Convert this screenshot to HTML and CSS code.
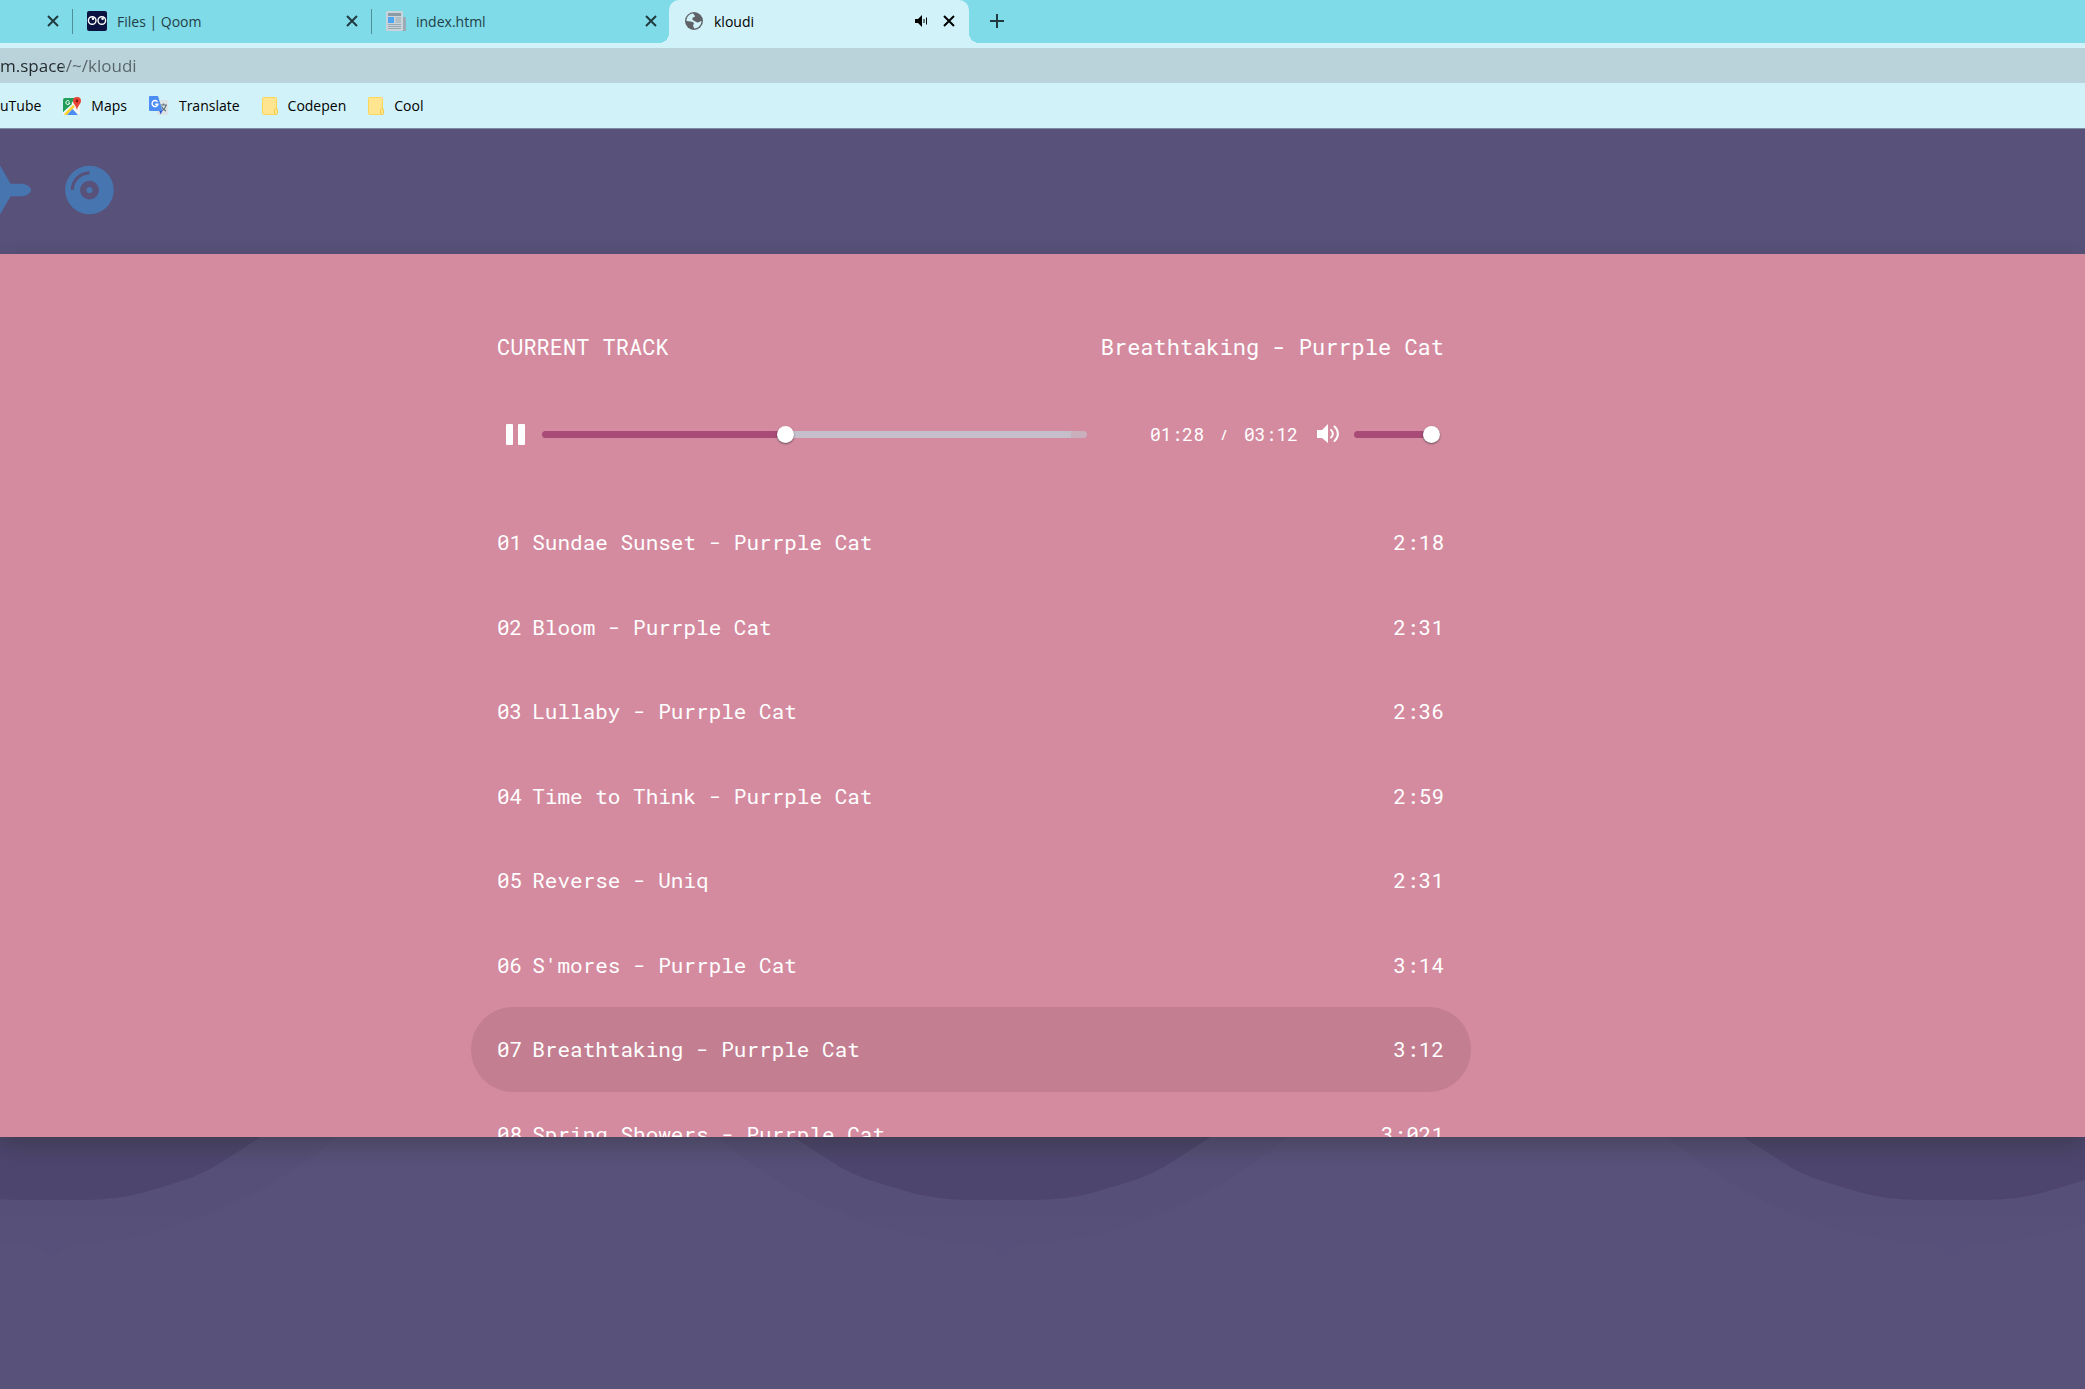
FILE: index.html
```html
<!DOCTYPE html>
<html lang="en">
<head>
<meta charset="utf-8">
<title>kloudi</title>
<link rel="stylesheet" href="styles.css">
</head>
<body>
<div class="browser">
  <div class="tabs">
    <div class="tab">
      <button class="icon-btn tab-end" aria-label="Close tab"><svg width="12" height="12" viewBox="0 0 12 12"><path d="M1 1l10 10M11 1L1 11"/></svg></button>
    </div>
    <div class="tab">
      <svg class="favicon" viewBox="0 0 20 20"><rect width="20" height="20" rx="2" fill="#0b1440"/><circle cx="5.2" cy="9.500" r="3.8" fill="none" stroke="#fff" stroke-width="1.4"/><circle cx="14.8" cy="9.500" r="3.8" fill="none" stroke="#fff" stroke-width="1.4"/><circle cx="6" cy="7.800" r="1.300" fill="#fff"/><circle cx="15.6" cy="7.800" r="1.300" fill="#fff"/></svg>
      <span class="tab-title">Files | Qoom</span>
      <button class="icon-btn tab-end" aria-label="Close tab"><svg width="12" height="12" viewBox="0 0 12 12"><path d="M1 1l10 10M11 1L1 11"/></svg></button>
    </div>
    <div class="tab tab-before">
      <svg class="favicon" viewBox="0 0 20 20"><path d="M15 6h5v12a2 2 0 0 1-4 2z" fill="#9aabb5"/><rect x="0" y="0" width="17" height="20" rx="1.5" fill="#c9d3d9"/><rect x="2" y="2" width="13" height="3" fill="#8b9ba5"/><rect x="2" y="6" width="6" height="6" fill="#4da6f0"/><path d="M9.500 7h5.500M9.500 9h5.500M9.500 11h5.500M2 13.500h13M2 15.500h13M2 17.500h13" stroke="#98a8b2" stroke-width="1"/></svg>
      <span class="tab-title">index.html</span>
      <button class="icon-btn tab-end" aria-label="Close tab"><svg width="12" height="12" viewBox="0 0 12 12"><path d="M1 1l10 10M11 1L1 11"/></svg></button>
    </div>
    <div class="tab tab-active">
      <svg class="favicon" viewBox="0 0 20 20"><circle cx="10" cy="10" r="9" fill="#5f6368"/><path d="M9 2.500C5 3 2.500 6 2.500 10l4 .500c2 0 3.500 1 3.500 2.500l-1 1 1 3.500c4 0 7.500-3.500 7.500-7.500l-3-.500-2 1.500-3-1.500c-2-1-1-3 .500-3.500l2.500-.500z" fill="#d1f2f8"/><path d="M10 2c-.500 2 1 2 1 3.500s-2 1-2 2.500 2 1 3 2.500 3 1 5-.500c0-4-3-7-7-8zM3 11c2 0 3.500 0 4.500 1.500S9 15 9.500 17.500C6 17 3 14 3 11z" fill="#5f6368"/></svg>
      <span class="tab-title">kloudi</span>
      <button class="icon-btn tab-end" aria-label="Mute tab"><svg width="13" height="12" viewBox="0 0 13 12"><path class="solid" d="M0 4h3l4-4v12L3 8H0z"/><path class="thin" d="M9 4v4M11.500 2.500v7"/></svg></button>
      <button class="icon-btn" aria-label="Close tab"><svg width="12" height="12" viewBox="0 0 12 12"><path d="M1 1l10 10M11 1L1 11"/></svg></button>
    </div>
    <button class="icon-btn new-tab" aria-label="New tab"><svg width="16" height="16" viewBox="0 0 16 16"><path d="M8 1v14M1 8h14"/></svg></button>
  </div>
  <div class="address"><input class="url" type="text" value="m.space/~/kloudi" aria-label="Address"></div>
  <nav class="bookmarks" aria-label="Bookmarks">
    <a href="#">uTube</a>
    <a href="#"><svg width="18" height="18" viewBox="0 0 18 18"><rect y="1" width="17" height="17" rx="2" fill="#f1f5f6"/><path d="M0 3a2 2 0 0 1 2-2h11L0 15z" fill="#1e9e58"/><path d="M1 17l9-9 2 1.500L4 18H2z" fill="#fbd130"/><path d="M0 3v12l9-8-2-5z" fill="#1e9e58"/><path d="M4 18l5.500-6 5.500 6z" fill="#4c8df5"/><path d="M6.500 4.500A2 2 0 1 0 6.800 6H5" fill="none" stroke="#fff"/><path d="M14 0a4 4 0 0 1 4 4c0 3-3 4-4 9-1-5-4-6-4-9a4 4 0 0 1 4-4z" fill="#e94335"/><circle cx="14" cy="4" r="1.400" fill="#8c1a14"/></svg>Maps</a>
    <a href="#"><svg width="20" height="19" viewBox="0 0 20 19"><rect x="8" y="4" width="11" height="15" rx="1" fill="#dce3e6"/><path d="M11 9h7M14.500 7.500V9M17 9c-.500 3-2.500 5-5 6M12.500 10.500c1 2 2.500 3.500 4.500 4.500" stroke="#607078" fill="none" stroke-width="1.200"/><path d="M10 14l4 0-2.500 4.500z" fill="#3a57c4"/><path d="M1 0h8l4.500 15H1a1 1 0 0 1-1-1V1a1 1 0 0 1 1-1z" fill="#4c8df5"/><path d="M8.500 5.800A3 3 0 1 0 9 8.200H6.200" fill="none" stroke="#fff" stroke-width="1.400"/></svg>Translate</a>
    <a href="#"><svg width="16" height="18" viewBox="0 0 16 18"><rect x=".5" y=".5" width="14" height="17" rx="1" fill="#ffe58f" stroke="#fbd65a"/><rect x="12.500" y="11.500" width="3" height="6" rx="1.500" fill="#ffe58f" stroke="#f4cc4e"/></svg>Codepen</a>
    <a href="#"><svg width="16" height="18" viewBox="0 0 16 18"><rect x=".5" y=".5" width="14" height="17" rx="1" fill="#ffe58f" stroke="#fbd65a"/><rect x="12.500" y="11.500" width="3" height="6" rx="1.500" fill="#ffe58f" stroke="#f4cc4e"/></svg>Cool</a>
  </nav>
</div>

<header class="site-header">
  <nav class="site-nav" aria-label="Site">
    <a href="#" aria-label="Travel"><svg width="56" height="50" viewBox="0 0 576 512"><path d="M480 192H365.710L260.610 8.060A16.014 16.014 0 0 0 246.710 0h-65.500c-10.630 0-18.300 10.170-15.380 20.390L214.860 192H112l-43.200-57.600c-3.020-4.030-7.770-6.400-12.800-6.400H16.010C5.600 128-2.040 137.780.490 147.880L32 256 .490 364.120C-2.040 374.220 5.600 384 16.010 384H56c5.040 0 9.780-2.370 12.800-6.400L112 320h102.860l-49.030 171.600c-2.920 10.220 4.750 20.400 15.380 20.400h65.500c5.740 0 11.040-3.080 13.890-8.060L365.710 320H480c35.350 0 96-28.650 96-64s-60.650-64-96-64z"/></svg></a>
    <a href="#" aria-label="Music"><svg width="49" height="50" viewBox="0 0 496 512"><path d="M248 8C111 8 0 119 0 256s111 248 248 248 248-111 248-248S385 8 248 8zM88 256H56c0-105.900 86.100-192 192-192v32c-88.200 0-160 71.800-160 160zm160 96c-53 0-96-43-96-96s43-96 96-96 96 43 96 96-43 96-96 96zm0-128c-17.700 0-32 14.300-32 32s14.300 32 32 32 32-14.300 32-32-14.300-32-32-32z"/></svg></a>
  </nav>
</header>

<main class="stage">
  <section class="playlist">
    <div class="now">
      <h1>CURRENT TRACK</h1>
      <p>Breathtaking - Purrple Cat</p>
    </div>
    <div class="player">
      <button class="icon-btn pause" aria-label="Pause"><svg width="19" height="21" viewBox="0 0 19 21"><rect width="7" height="21" rx="1"/><rect x="12" width="7" height="21" rx="1"/></svg></button>
      <input class="range seek" type="range" min="0" max="1000" value="445" aria-label="Seek">
      <span class="time">01:28</span><span class="slash">/</span><span class="time">03:12</span>
      <button class="icon-btn mute" aria-label="Mute"><svg width="23" height="20" viewBox="0 0 23 20"><path d="M0 6h5l6-6v19l-6-5H0z"/><path class="wave" d="M14 6c2.500 2 2.500 5.500 0 7.500M17.500 2.500c4.500 4 4.500 10.500 0 14.500"/></svg></button>
      <input class="range volume" type="range" min="0" max="100" value="100" aria-label="Volume">
    </div>
    <ol class="tracks">
      <li><span>01</span><span>Sundae Sunset - Purrple Cat</span><span class="length">2:18</span></li>
      <li><span>02</span><span>Bloom - Purrple Cat</span><span class="length">2:31</span></li>
      <li><span>03</span><span>Lullaby - Purrple Cat</span><span class="length">2:36</span></li>
      <li><span>04</span><span>Time to Think - Purrple Cat</span><span class="length">2:59</span></li>
      <li><span>05</span><span>Reverse - Uniq</span><span class="length">2:31</span></li>
      <li><span>06</span><span>S'mores - Purrple Cat</span><span class="length">3:14</span></li>
      <li class="playing"><span>07</span><span>Breathtaking - Purrple Cat</span><span class="length">3:12</span></li>
      <li><span>08</span><span>Spring Showers - Purrple Cat</span><span class="length">3:021</span></li>
    </ol>
  </section>
</main>

<footer class="scenery">
  <svg width="100%" height="140" aria-hidden="true">
    <defs>
      <linearGradient id="haze" x1="0" y1="0" x2="0" y2="1">
        <stop offset="0.400" stop-color="#564f78"/>
        <stop offset="1" stop-color="#57507a"/>
      </linearGradient>
      <pattern id="hills" x="-423" y="0" width="950" height="140" patternUnits="userSpaceOnUse">
        <path d="M190 0C260 60 350 102 455 108Q468 112 475 124Q482 112 495 108C600 102 690 60 760 0z" fill="url(#haze)"/>
        <path d="M266 0L302 23Q322 37 348 45L385 56Q412 63 440 63H510Q538 63 565 56L602 45Q628 37 648 23L684 0z" fill="#4d456e"/>
      </pattern>
    </defs>
    <rect width="100%" height="140" fill="url(#hills)"/>
  </svg>
</footer>
</body>
</html>
```
FILE: styles.css
```css
* {
  box-sizing: border-box;
}

body {
  margin: 0;
  height: 100vh;
  display: flex;
  flex-direction: column;
  overflow: hidden;
  background: #58517a;
  font-family: "Roboto Mono", "DejaVu Sans Mono", monospace;
}

a {
  color: inherit;
  text-decoration: none;
}

.icon-btn {
  display: flex;
  padding: 0;
  border: 0;
  background: none;
}

/* Browser frame */

.browser {
  flex: none;
  background: #d1f2f8;
  border-bottom: 1px solid #7f8ea0;
  font-family: "Segoe UI", "Open Sans", sans-serif;
  font-size: 14px;
}

.tabs {
  display: flex;
  align-items: center;
  height: 43px;
  padding: 0 16px 1px 0;
  background: #80dbe8;
  color: #1f4046;
}

.tabs .icon-btn svg {
  fill: none;
  stroke: #203a40;
  stroke-width: 2;
}

.tabs .solid {
  fill: #000;
  stroke: none;
}

.tabs .thin {
  stroke-width: 1;
}

.tab {
  flex: none;
  display: flex;
  align-items: center;
  gap: 10px;
  width: 299px;
  height: 25px;
  padding: 0 13px 0 14px;
  border-right: 1px solid #4f8f99;
}

.tab:first-child {
  margin-left: -226px;
}

.tab-before {
  width: 297px;
  border-right: 0;
  padding-right: 12px;
}

.tab-end {
  margin-left: auto;
}

.favicon {
  flex: none;
  width: 20px;
  height: 20px;
}

.tab-active {
  position: relative;
  align-self: flex-start;
  width: 300px;
  height: 43px;
  padding: 0 14px 1px 15px;
  border: 0;
  border-radius: 10px 10px 0 0;
  background: #d1f2f8;
  color: #000;
}

.tab-active .tab-end {
  margin-right: 5px;
}

.tab-active .icon-btn svg {
  stroke: #000;
}

.tab-active::before,
.tab-active::after {
  content: "";
  position: absolute;
  bottom: 0;
  width: 10px;
  height: 10px;
}

.tab-active::before {
  right: 100%;
  background: radial-gradient(circle at 0 0, #80dbe8 10px, #d1f2f8 10px);
}

.tab-active::after {
  left: 100%;
  background: radial-gradient(circle at 100% 0, #80dbe8 10px, #d1f2f8 10px);
}

.new-tab {
  margin-left: 20px;
}

.address {
  margin-top: 5px;
  height: 35px;
  background: #bad3da;
}

.url {
  width: 100%;
  height: 35px;
  padding: 0;
  border: 0;
  outline: 0;
  font: 17px "Segoe UI", "Open Sans", sans-serif;
  background: linear-gradient(90deg, #20282b 63px, #566468 63px);
  -webkit-background-clip: text;
  background-clip: text;
  color: transparent;
}

.bookmarks {
  display: flex;
  align-items: center;
  gap: 22px;
  height: 45px;
  color: #000;
}

.bookmarks a {
  display: flex;
  align-items: center;
  gap: 10px;
}

/* Site header */

.site-header {
  flex: none;
  display: flex;
  align-items: center;
  height: 125px;
  padding-bottom: 3px;
}

.site-nav {
  display: flex;
  gap: 34px;
  margin-left: -25px;
}

.site-nav svg {
  display: block;
  fill: #4775b0;
}

/* Player */

.stage {
  position: relative;
  flex: 1;
  min-height: 0;
  overflow-y: auto;
  scrollbar-width: none;
  display: flex;
  justify-content: center;
  align-items: flex-start;
  padding: 77px 143px 0 0;
  background: #d48b9f;
  box-shadow: 0 8px 20px rgba(32, 40, 24, 0.3);
  color: #fff;
}

.playlist {
  width: 100%;
  max-width: 1000px;
}

.now {
  display: flex;
  justify-content: space-between;
  padding: 0 27px 0 26px;
  font-size: 22px;
  line-height: 32px;
}

.now h1,
.now p {
  margin: 0;
  font-size: inherit;
  font-weight: 400;
}

.player {
  display: flex;
  align-items: center;
  margin-top: 55px;
  padding: 0 31px 0 35px;
  height: 32px;
  font-size: 18px;
}

.pause {
  margin-right: 17px;
}

.player svg {
  fill: #fff;
}

.player .wave {
  fill: none;
  stroke: #fff;
  stroke-width: 2;
  stroke-linecap: round;
}

.range {
  appearance: none;
  height: 20px;
  margin: 0;
  background: none;
}

.range::-webkit-slider-runnable-track {
  height: 7px;
  border-radius: 4px;
  background: #a84b76;
}

.range::-webkit-slider-thumb {
  appearance: none;
  width: 17px;
  height: 17px;
  margin-top: -5px;
  border-radius: 50%;
  background: #fff;
  box-shadow: 0 1px 2px rgba(35, 41, 47, 0.6);
}

.seek {
  flex: 1;
  margin-right: 63px;
}

.seek::-webkit-slider-runnable-track {
  background: linear-gradient(90deg, #a84b76 44%, #c4bfcb 44%, #c4bfcb 97%, #c9aebc 97%);
}

.slash {
  width: 40px;
  text-align: center;
  font-size: 13px;
  font-weight: 500;
}

.mute {
  margin: 0 14px 0 19px;
}

.volume {
  width: 86px;
}

.tracks {
  display: grid;
  grid-auto-rows: 1fr;
  height: 676px;
  margin: 50px 0 0;
  padding: 0;
  list-style: none;
  font-size: 21px;
}

.tracks li {
  display: flex;
  align-items: center;
  gap: 10px;
  padding: 0 27px 0 26px;
  border-radius: 42px;
}

.tracks .playing {
  background: #c37f91;
}

.length {
  margin-left: auto;
}

/* Scenery below the player */

.scenery {
  flex: none;
  height: 252px;
}

.scenery svg {
  display: block;
}
```
